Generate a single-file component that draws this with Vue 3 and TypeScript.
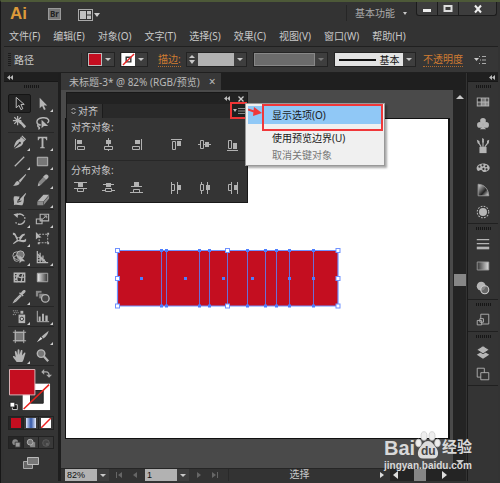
<script setup lang="ts">
import { ref } from 'vue'

interface Tool { name: string; art: string; more?: boolean }
interface Icon { name: string; art: string }

const menus = ['文件(F)', '编辑(E)', '对象(O)', '文字(T)', '选择(S)', '效果(C)', '视图(V)', '窗口(W)', '帮助(H)']

const line = 'fill="none" stroke="currentColor"'

const toolGroups: Tool[][] = [
  [
    { name: '选择工具', art: `<path d="M5.5 2.5v11l3-2.5 2 4.5 2-1-2-4.5h3.5z" fill="#222" stroke="#c4c4c4"/>` },
    { name: '直接选择工具', more: true, art: `<path d="M6 3v11l2.6-2.4 2 4.4 1.8-.9-2-4.1H14z"/>` },
    { name: '魔棒工具', art: `<path d="M8 8l2-1.500 6 6.500-2 2z"/><path d="M7 2v10M2 7h9M3.500 3.500l7 7M10.500 3.500l-7 7" ${line} stroke-width="1.300"/>` },
    { name: '套索工具', art: `<path d="M7 12c-5-1-6-7 2-8 7-.8 8 4 5 5.500M7 12c-2-2-4 0-2.500 1.500 2 1 1.500 2 0 2.500" ${line} stroke-width="1.500"/><path d="M8 6v9l2.500-2.300H15z"/>` },
  ],
  [
    { name: '钢笔工具', more: true, art: `<path d="M10.500 3l4.500 4-2 1.500c0 3-2 5-9.500 7L9 10.500 8 9.500l-5 5C4.500 8 6 6 9.500 5z"/><path d="M12 1.500l4 4-1 1-4-4z"/><circle cx="9.300" cy="9.500" r="1.200" fill="#333"/>` },
    { name: '文字工具', more: true, art: `<path d="M4 3h10v3.500h-1c-.3-1.800-1-2-3-2V13c0 1 .5 1.200 1.500 1.200v.8h-5v-.8C7.500 14.200 8 14 8 13V4.500c-2 0-2.700.2-3 2H4z"/>` },
    { name: '直线段工具', more: true, art: `<path d="M4 14L14 4" ${line} stroke-width="1.300"/>` },
    { name: '矩形工具', more: true, art: `<path d="M3.500 4.500h11v9h-11z" fill="#777" stroke="#bbb"/>` },
    { name: '画笔工具', art: `<path d="M15.500 2L8 9.200l1.800 1.900L16 3z"/><path d="M7.300 9.500l2 2C8.500 14.500 5 15 2 14.500c2.500-1 2-4.500 5.300-5z"/>` },
    { name: '铅笔工具', more: true, art: `<path d="M12 3l3 3-7 7-4 2 1-4.500z" fill="#858585"/><path d="M12 3c1.500-1.500 4.500 1 3 3l-2 2-3.300-3z"/><path d="M4 15l.8-3 2 2z"/>` },
    { name: '斑点画笔工具', art: `<path d="M3 6c2-1 4 .5 6-.5L8 11l5-5.500c1 1 1 7-1 9.500-3 .5-6-1-9 0 1-3-1-6 0-9z"/><path d="M15.500 2L10 8l-1 3 3-1.500L16 3z"/><path d="M8 8.500L7 12l4-1.500" fill="none" stroke="#333"/>` },
    { name: '橡皮擦工具', more: true, art: `<path d="M10 4h6l-6 7H3.500z"/><path d="M3.500 11.500H10V15H3.500zM10.600 11L16 4.700V8l-5.400 6.500z" fill="#8b8b8b"/>` },
  ],
  [
    { name: '旋转工具', more: true, art: `<path d="M5.500 4.500a5.500 5.500 0 1 1-1 7" ${line} stroke-width="1.500" stroke-dasharray="9 1.500 1.500 1.500"/><path d="M2.500 3.500l5-1-.5 5z"/>` },
    { name: '比例缩放工具', more: true, art: `<path d="M6.500 3.500h9v7h-9zM2.500 8.500h6v5h-6z" ${line} stroke-width="1.200"/><path d="M9 8.500l4-3M10.500 5.200h3v2.500" ${line}/>` },
    { name: '宽度工具', more: true, art: `<path d="M2 3c4-1 3 5 6 5 2-1 3-5 7-4l-1 2c-2 0-2 3-4 4 2 1 4 1 6-1v3c-3 2-6 0-8 0-3 1-4 3-6 3 1-3 4-3 4-5C4.500 8 4.500 5 2 5z"/><circle cx="8" cy="9.500" r="1" fill="#333"/>` },
    { name: '自由变换工具', art: `<path d="M5.500 4.500h9v9h-9z" ${line} stroke-dasharray="2 1.200"/><path d="M2 2v8l2.300-2H8z"/><path d="M14 3h2v2h-2zM14 13h2v2h-2zM4 13h2v2H4z"/>` },
    { name: '形状生成器工具', more: true, art: `<circle cx="6" cy="7" r="4" ${line}/><circle cx="10" cy="6" r="4" fill="#777" stroke="#bbb"/><circle cx="6" cy="10" r="3" ${line}/><path d="M9 6.500V15l2.300-2H15z"/>` },
    { name: '透视网格工具', more: true, art: `<path d="M3.500 2v12.500H15M6.500 4v10M9.500 7v7M3.500 5l9 9M3.500 8.500H8M3.500 11.500h8" ${line} stroke-width="1.300"/>` },
  ],
  [
    { name: '网格工具', art: `<path d="M3.500 4.500h11v9h-11z" ${line} stroke-width="1.500"/><path d="M3 8c4-3 5 4 12 0M6 14c2-3-2-6 1-9M10 14c3-3 0-5 3-9M4 12l5-7" ${line} stroke-width="1.300"/>` },
    { name: '渐变工具', art: `<defs><linearGradient id="tg"><stop stop-color="#eee"/><stop offset="1" stop-color="#333"/></linearGradient></defs><path d="M3.500 4.500h11v9h-11z" fill="url(#tg)" stroke="#aaa"/>` },
    { name: '吸管工具', more: true, art: `<path d="M10 7l-6 6-1 2 2-1 6-6" ${line} stroke-width="1.300"/><path d="M8.500 5.500l1-1 1 .8c1-2 3-4.300 4.500-2.800s-1 3.500-2.600 4.500l1 1-1 1z"/>` },
    { name: '混合工具', art: `<path d="M2 3h6v6H2z" fill="#888"/><path d="M5 5.500h6v6H5z" fill="#888" stroke="#333"/><circle cx="12" cy="11" r="4" fill="#444" stroke="#b5b5b5" stroke-width="1.400"/>` },
  ],
  [
    { name: '符号喷枪工具', more: true, art: `<path d="M8 7h7v9H8z"/><path d="M10 3h3v3h-3z"/><circle cx="11.500" cy="11.500" r="1.800" fill="#ccc" stroke="#333"/><path d="M2 3h5M3 5h5M2 7h4" ${line} stroke-dasharray="1 1"/>` },
    { name: '柱形图工具', more: true, art: `<path d="M3.500 3v11.500H16" ${line}/><path d="M5 9h2v5H5zM8.500 6h2v8h-2zM12 8h2.500v6H12z"/>` },
  ],
  [
    { name: '画板工具', art: `<path d="M4.500 4.500h9v9h-9z" fill="#777" stroke="#b5b5b5"/><path d="M2 4.500h14M2 13.500h14M4.500 2v14M13.500 2v14" ${line}/>` },
    { name: '切片工具', more: true, art: `<path d="M15.500 3L8 9l2 2.200c3-2 5-5 5.500-8.200z"/><path d="M7 9.500l2 2L3 15z" fill="#ddd"/>` },
    { name: '抓手工具', more: true, art: `<path d="M6 16c-1-2-3.500-4-4-6 1-1 2 0 3 1L4 5c.8-1.200 1.800-.5 2 .5l.8 3L7 3c.8-1.200 1.800-.8 1.900.2l.1 5L10.500 3.500c1-.8 1.800-.2 1.600.8L11.700 9 14 6c1-.5 1.500.3 1.200 1.200C14 10 14 13 12 16z"/>` },
    { name: '缩放工具', art: `<circle cx="7.500" cy="7" r="4" fill="#777" stroke="#b5b5b5" stroke-width="1.500"/><path d="M10.500 10l4.500 5" ${line} stroke-width="2.400"/>` },
  ],
]

const dockGroups: Icon[][] = [
  [
    { name: '色板', art: `<path d="M2 4h14v10H2z"/><path d="M3 5h3.500v3.500H3z" fill="#222"/><path d="M7.500 5h3.500v3.500H7.500z" fill="#777"/><path d="M12 5h3v3.500h-3zM3 9.500h3.500V13H3z" fill="#555"/><path d="M7.500 9.500h3.500V13H7.500zM12 9.500h3V13h-3z" fill="#8d8d8d"/>` },
    { name: '符号', art: `<circle cx="9" cy="5.500" r="3.200"/><circle cx="5.500" cy="10" r="3.200"/><circle cx="12.500" cy="10" r="3.200"/><path d="M8.300 7h1.400l.5 5.500 2.300 2.500h-7L7.800 12.500z"/>` },
    { name: '画笔', art: `<path d="M5 10h8v7H5z"/><path d="M7 10L4 5M9 10V4M11 10l3-4" ${line} stroke-width="1.300"/><path d="M2 2l3 1.500V7L3 6zM8 0l2 1v4H8zM13.500 3L16 2l-.5 4-2 1z"/>` },
    { name: '颜色', art: `<path d="M9 4c5 0 7.500 2.500 7.500 5s-3 4.500-6.500 4.500c-2 0-1.500-2-3-2.200C5 11 4.500 13 3 12 0 9 3 4 9 4z"/><g fill="#333"><circle cx="5" cy="7.500" r="1.200"/><circle cx="8.500" cy="6" r="1.200"/><circle cx="12.500" cy="7" r="1.200"/><circle cx="13" cy="10.500" r="1.200"/><circle cx="9.500" cy="10" r="1.200"/></g>` },
    { name: '颜色参考', art: `<defs><linearGradient id="cg" x1="0" x2="1" y1="0" y2="1"><stop stop-color="#ddd"/><stop offset=".6" stop-color="#222"/><stop offset="1" stop-color="#eee"/></linearGradient></defs><path d="M3.500 2.500C11 3 15 8 15.500 15.500h-12z" fill="url(#cg)" stroke="#999"/>` },
    { name: '外观', art: `<circle cx="9" cy="9" r="4.500"/><circle cx="9" cy="9" r="6.500" ${line} stroke-width="1.200" stroke-dasharray="2 1.400"/>` },
  ],
  [
    { name: '描边', art: `<path d="M2 4h14M2 8.500h14" ${line} stroke-width="1.500"/><path d="M2 12h14v3H2z"/>` },
    { name: '渐变', art: `<defs><linearGradient id="dg"><stop stop-color="#333"/><stop offset="1" stop-color="#ddd"/></linearGradient></defs><path d="M2.500 4.500h13v9h-13z" fill="url(#dg)" stroke="#999"/>` },
    { name: '透明度', art: `<circle cx="7" cy="7" r="5"/><circle cx="11" cy="11" r="4.500" fill="#777" fill-opacity=".75" stroke="#ccc" stroke-width="1.200"/>` },
  ],
  [{ name: '变换', art: `<path d="M6.500 2.500h9v11h-9z" ${line}/><path d="M2.500 9.500h5v5h-5zM5.500 7.500h4v4h-4z" fill="#333" stroke="#b5b5b5"/>` }],
  [
    { name: '图层', art: `<path d="M9 8l7 4-7 4.500L2 12z"/><path d="M9 2l7 4.500-7 4.500-7-4.500z" stroke="#333"/>` },
    { name: '画板', art: `<path d="M2.500 2.500h8v10h-8z" ${line}/><path d="M6.500 7.500h9v8h-9z" fill="#333" stroke="#b5b5b5"/>` },
  ],
]

const alignRows: { label: string; groups: Icon[][] }[] = [
  {
    label: '对齐对象:',
    groups: [
      [
        { name: '水平左对齐', art: `<path d="M1.500 1v11" ${line}/><path d="M3 2h5v4H3z"/><path d="M3.500 8.500h7v3h-7z" ${line}/>` },
        { name: '水平居中对齐', art: `<path d="M6.500 0v13" ${line}/><path d="M4 2h5v4H4z"/><path d="M2.500 8.500h8v3h-8z" fill="#333" stroke="currentColor"/>` },
        { name: '水平右对齐', art: `<path d="M11.500 1v11" ${line}/><path d="M5 2h5v4H5z"/><path d="M2.500 8.500h7v3h-7z" ${line}/>` },
      ],
      [
        { name: '垂直顶对齐', art: `<path d="M1 1.500h11" ${line}/><path d="M7 3h4v5H7z"/><path d="M2.500 3.500h3v8h-3z" ${line}/>` },
        { name: '垂直居中对齐', art: `<path d="M0 6.500h13" ${line}/><path d="M7 4h4v5H7z"/><path d="M2.500 2.500h3v8h-3z" fill="#333" stroke="currentColor"/>` },
        { name: '垂直底对齐', art: `<path d="M1 12.500h11" ${line}/><path d="M7 5h4v6H7z"/><path d="M2.500 2.500h3v8h-3z" ${line}/>` },
      ],
    ],
  },
  {
    label: '分布对象:',
    groups: [
      [
        { name: '垂直顶分布', art: `<path d="M0 1.500h13M0 7.500h13" ${line}/><path d="M4 2h5v4H4z"/><path d="M3.500 7.500h6v3h-6z" ${line}/>` },
        { name: '垂直居中分布', art: `<path d="M1 3.500h11M0 9.500h13" ${line}/><path d="M4 2h5v4H4z"/><path d="M3.500 7.500h6v3h-6z" fill="#333" stroke="currentColor"/>` },
        { name: '垂直底分布', art: `<path d="M1 5.500h11M0 11.500h13" ${line}/><path d="M4 1h5v4H4z"/><path d="M3.500 8.500h6v3h-6z" ${line}/>` },
      ],
      [
        { name: '水平左分布', art: `<path d="M1.500 1v12M7.500 1v12" ${line}/><path d="M8 4h3v5H8z"/><path d="M1.500 3.500h3v6h-3z" ${line}/>` },
        { name: '水平居中分布', art: `<path d="M3.500 1v12M9.500 1v12" ${line}/><path d="M8 4h4v5H8z"/><path d="M2.500 3.500h3v6h-3z" fill="#333" stroke="currentColor"/>` },
        { name: '水平右分布', art: `<path d="M5.500 1v12M11.500 1v12" ${line}/><path d="M8 4h3v5H8z"/><path d="M2.500 3.500h3v6h-3z" ${line}/>` },
      ],
    ],
  },
]

const edges = [161.5, 166.5, 199.5, 209.5, 227.5, 247.5, 265.5, 276.5, 289.5, 313.5]
const centers = [141.5, 185.5, 223.5, 252.5, 289.5, 313.5]
const handles = [117.5, 227.5, 338]

const active = ref('选择工具')
const strokeWidth = ref('')
const zoom = ref('82%')
const page = ref('1')
</script>

<template>
  <div class="app">
    <header class="titlebar">
      <span class="logo">Ai</span>
      <button class="bridge" aria-label="Bridge">Br</button>
      <button class="arrange" aria-label="排列文档">
        <svg width="22" height="12" viewBox="0 0 22 12"><rect x=".5" y=".5" width="14" height="11" fill="#333" stroke="#aaa" /><path d="M2 2h6v8H2zM9 2h4v3.500H9zM9 6.500h4V10H9z" fill="#c2c2c2" /><path d="M16 4h6l-3 4z" fill="#ccc" /></svg>
      </button>
      <button class="workspace">基本功能 <i class="caret"></i></button>
      <div class="controls">
        <button aria-label="最小化"><svg width="12" height="10" viewBox="0 0 12 10"><path d="M2 5h8v3H2z" fill="#eee" /></svg></button>
        <button aria-label="最大化"><svg width="12" height="10" viewBox="0 0 12 10"><path d="M2.500 2h7v5h-7z" fill="none" stroke="#ddd" stroke-width="2" /></svg></button>
        <button class="close" aria-label="关闭"><svg width="12" height="10" viewBox="0 0 12 10"><path d="M3 1.500l6 7M9 1.500l-6 7" stroke="#eee" stroke-width="2" /></svg></button>
      </div>
    </header>

    <nav class="menubar">
      <button v-for="m in menus" :key="m">{{ m }}</button>
    </nav>

    <section class="options">
      <i class="vgrip"></i>
      <span class="kind">路径</span>
      <div class="combo fill"><button class="swatch red" aria-label="填色"></button><button class="drop" aria-label="填色选项"><i class="caret"></i></button></div>
      <div class="combo stroke"><button class="swatch none" aria-label="描边颜色"><svg viewBox="0 0 14 14"><path d="M0 0h14v14H0z" fill="#fff" /><path d="M4.500 4.500h5v5h-5z" fill="none" stroke="#333" stroke-width="1.500" /><path d="M1 13L13 1" stroke="#e22" stroke-width="1.500" /></svg></button><button class="drop" aria-label="描边选项"><i class="caret"></i></button></div>
      <label class="link" for="sw">描边:</label>
      <div class="combo weight">
        <button class="spin" aria-label="调整粗细"><i class="caret up"></i><i class="caret"></i></button>
        <input id="sw" v-model="strokeWidth" />
        <button class="drop" aria-label="粗细列表"><i class="caret"></i></button>
      </div>
      <div class="combo profile"><button class="preview dim" aria-label="变量宽度"></button><button class="drop off" aria-label="宽度配置"><i class="caret"></i></button></div>
      <div class="combo brush"><button class="preview light"><i class="rule"></i>基本</button><button class="drop" aria-label="画笔定义"><i class="caret"></i></button></div>
      <a class="link" href="#opacity">不透明度</a>
      <button class="flyout" aria-label="面板菜单"><svg width="12" height="10" viewBox="0 0 12 10"><path d="M0 3h5L2.500 6z" fill="#ccc" /><path d="M5 1.500h1M8 1.500h4M6 5h1M8 5h4M5 8.500h1M8 8.500h4" stroke="#aaa" /></svg></button>
    </section>

    <div class="body">
      <aside class="tools">
        <div class="head"><svg class="chev" viewBox="0 0 6 5"><path d="M3 0v5L0 2.500zM6 0v5L3 2.500z" /></svg></div>
        <i class="grip"></i>
        <div v-for="(g, i) in toolGroups" :key="i" class="toolgroup">
          <button v-for="t in g" :key="t.name" class="tool" :class="{ active: t.name === active, more: t.more }" :aria-label="t.name" @click="active = t.name">
            <svg viewBox="0 0 18 18" v-html="t.art"></svg>
          </button>
        </div>
        <svg class="colors" viewBox="0 0 44 44">
          <path d="M14 15h28v27H14z" fill="#fff" /><path d="M22 22h13v13H22z" fill="#333" stroke="#222" /><path d="M15 41L41 16" stroke="#e8201a" stroke-width="1.500" />
          <path d="M.5.500h26v26H.5z" fill="#c40e20" stroke="#ddb5b8" />
          <path d="M35 3h3q3 0 3 4" fill="none" stroke="#aaa" stroke-width="1.300" /><path d="M36 0v6l-3-3zM38 6h6l-3 3z" fill="#aaa" />
          <path d="M3.500 36.500h5v5h-5z" fill="#111" stroke="#ccc" /><path d="M1 34h5v5H1z" fill="#fff" stroke="#222" />
        </svg>
        <div class="modes">
          <button aria-label="颜色"><i class="m-color"></i></button>
          <button aria-label="渐变"><i class="m-grad"></i></button>
          <button aria-label="无"><svg class="m-none" viewBox="0 0 10 10"><path d="M0 0h10v10H0z" fill="#fff" /><path d="M0 10L10 0" stroke="#e22" stroke-width="1.500" /></svg></button>
        </div>
        <div class="modes draw">
          <button aria-label="正常绘图"><svg viewBox="0 0 12 12"><circle cx="5" cy="5" r="3.500" fill="#888" /><path d="M5 5h6v6H5z" fill="#999" stroke="#333" /></svg></button>
          <button aria-label="背面绘图"><svg viewBox="0 0 12 12"><path d="M5 5h6v6H5z" fill="#888" /><circle cx="5" cy="5" r="3.500" fill="#777" stroke="#bbb" /></svg></button>
          <button aria-label="内部绘图"><svg viewBox="0 0 12 12"><circle cx="6" cy="6" r="4" fill="#444" stroke="#5e5e5e" /><path d="M6 6h3v3H6z" fill="#5e5e5e" /></svg></button>
        </div>
        <button class="screen" aria-label="更改屏幕模式"><svg width="18" height="14" viewBox="0 0 18 14"><path d="M1.500 5.500h9v7h-9z" fill="#666" stroke="#aaa" /><path d="M5.500 1.500h11v7h-11z" fill="#777" stroke="#bbb" /></svg></button>
      </aside>

      <main class="doc">
        <div class="tabs"><div class="tab">未标题-3* @ 82% (RGB/预览)<button aria-label="关闭文档">×</button></div></div>
        <div class="work">
          <div class="canvas">
            <div class="artboard">
              <svg class="art" width="228" height="64" viewBox="114 247 228 64">
                <path d="M117.500 250.500h220.500v55.500h-220.500z" fill="#c40e20" stroke="#6f91ff" stroke-width="1.200" />
                <g v-for="x in edges" :key="x">
                  <path :d="`M${x} 251v55`" stroke="#6a6fd8" stroke-width="1" />
                  <path :d="`M${x - 1.5} 249h3v3h-3zM${x - 1.5} 304.500h3v3h-3z`" fill="#4d7dff" />
                </g>
                <path v-for="x in centers" :key="'c' + x" :d="`M${x - 1.5} 277h3v3h-3z`" fill="#4d7dff" />
                <template v-for="x in handles" :key="'h' + x">
                  <rect v-for="y in (x === 227.5 ? [250.5, 306] : [250.5, 278.5, 306])" :key="y" :x="x - 2" :y="y - 2" width="4" height="4" fill="#fff" stroke="#6f91ff" />
                </template>
              </svg>
            </div>
          </div>
          <div class="vscroll"><i class="caret up"></i><i class="thumb"></i><i class="caret"></i></div>
        </div>
        <footer class="status">
          <input v-model="zoom" aria-label="缩放" /><button class="drop" aria-label="缩放列表"><i class="caret"></i></button>
          <div class="nav"><button aria-label="首项"><svg viewBox="0 0 8 8"><path d="M1 1h1v6H1zM7 1v6L3 4z" /></svg></button><button aria-label="上一项"><svg viewBox="0 0 8 8"><path d="M6 1v6L2 4z" /></svg></button></div>
          <input v-model="page" aria-label="画板" /><button class="drop" aria-label="画板列表"><i class="caret"></i></button>
          <div class="nav"><button aria-label="下一项"><svg viewBox="0 0 8 8"><path d="M2 1v6l4-3z" /></svg></button><button aria-label="末项"><svg viewBox="0 0 8 8"><path d="M6 1h1v6H6zM1 1v6l4-3z" /></svg></button></div>
          <div class="state">选择</div>
          <button class="tri" aria-label="状态菜单"><svg viewBox="0 0 8 8"><path d="M2 1v6l4-3z" /></svg></button>
          <div class="hscroll"><svg viewBox="0 0 8 8"><path d="M6 0v8L1 4z" /></svg><i class="thumb"></i><svg viewBox="0 0 8 8"><path d="M2 0v8l5-4z" /></svg></div>
        </footer>

        <section class="panel">
          <div class="phead"><svg class="chev" viewBox="0 0 6 5"><path d="M3 0v5L0 2.500zM6 0v5L3 2.500z" /></svg><button aria-label="关闭面板"><svg viewBox="0 0 6 6"><path d="M.5.500l5 5M5.500.500l-5 5" stroke="#ccc" stroke-width="1.300" /></svg></button></div>
          <div class="ptabs">
            <div class="ptab"><svg width="5" height="8" viewBox="0 0 5 8"><path d="M.5 3l2-2 2 2M.5 5l2 2 2-2" fill="none" stroke="#bbb" /></svg>对齐</div>
            <button class="pmenu" aria-label="面板菜单"><svg width="12" height="8" viewBox="0 0 12 8"><path d="M0 2h4L2 5z" fill="#bbb" /><path d="M5 1.500h7M5 4h7M5 6.500h7" stroke="#888" /></svg></button>
          </div>
          <div v-for="r in alignRows" :key="r.label" class="prow">
            <div class="plabel">{{ r.label }}</div>
            <div class="pgroups">
              <div v-for="(g, i) in r.groups" :key="i" class="pgroup">
                <button v-for="b in g" :key="b.name" :aria-label="b.name"><svg viewBox="0 0 13 13" v-html="b.art"></svg></button>
              </div>
            </div>
          </div>
        </section>

        <div class="popup" role="menu">
          <button class="hot" role="menuitem">显示选项(O)</button>
          <button role="menuitem">使用预览边界(U)</button>
          <button role="menuitem" disabled>取消关键对象</button>
          <svg class="arrow" width="14" height="10" viewBox="0 0 14 10"><path d="M0 2.500l6 2" stroke="#f0383a" stroke-width="2" /><path d="M6 0l8 6-9 3z" fill="#f0383a" /></svg>
        </div>
      </main>

      <aside class="dock">
        <div class="head"><svg class="chev" viewBox="0 0 6 5"><path d="M3 0v5L0 2.500zM6 0v5L3 2.500z" /></svg></div>
        <div v-for="(g, i) in dockGroups" :key="i" class="dockgroup">
          <i class="grip"></i>
          <button v-for="b in g" :key="b.name" :aria-label="b.name"><svg viewBox="0 0 18 18" v-html="b.art"></svg></button>
        </div>
      </aside>
    </div>

    <div class="mark">
      <div class="brand">
        <span class="bai">Bai</span>
        <span class="paw">
          <svg width="26" height="29" viewBox="0 0 26 29"><g fill="#eee" stroke="#ccc" stroke-width=".8"><ellipse cx="3.500" cy="13" rx="2.800" ry="3.800" /><ellipse cx="9" cy="6" rx="3" ry="4.300" /><ellipse cx="17" cy="6" rx="3" ry="4.300" /><ellipse cx="22.500" cy="13" rx="2.800" ry="3.800" /></g><path d="M13 11c4 0 5 3 8 6.500s3.500 11-3 11H8c-6.500 0-6-7.500-3-11s4-6.500 8-6.500z" /></svg>
          <b>du</b>
        </span>
        <span class="jy">经验</span>
      </div>
      <div class="site">jingyan.baidu.com</div>
    </div>
  </div>
</template>

<style>
body { background: #222; }
</style>

<style scoped>
* { box-sizing: border-box; }
.app {
  position: relative;
  display: flex;
  flex-direction: column;
  min-height: 100vh;
  padding: 0 2px 2px 3px;
  border-top: 2px solid #4d5938;
  background: #333;
  border-left: 1px solid #171717;
  color: #c8c8c8;
  font: 10px/14px "Noto Sans", "Noto Sans CJK SC", sans-serif;
  white-space: nowrap;
}
button { display: flex; align-items: center; justify-content: center; padding: 0; border: 0; background: none; color: inherit; font: inherit; }
input { min-width: 0; padding: 0 2px; border: 0; border-radius: 0; background: #b2b2b2; color: #111; font: inherit; }
svg { display: block; flex: none; }
.caret { display: block; width: 6px; border: 3px solid transparent; border-top: 4px solid #c8c8c8; border-bottom: 0; }
.caret.up { border-top: 0; border-bottom: 4px solid #c8c8c8; }

.titlebar { display: flex; height: 24px; padding-left: 6px; align-items: flex-start; }
.logo { width: 38px; color: #dc9a3a; font: bold 17px/24px "Liberation Sans", sans-serif; }
.bridge { width: 13px; height: 12px; margin-top: 6px; border: 1px solid #999; background: #777; color: #222; font-size: 8px; font-weight: bold; line-height: 8px; }
.arrange { margin: 7px 0 0 17px; }
.workspace { gap: 8px; height: 16px; margin: 3px 9px 0 auto; padding-left: 8px; border-left: 1px solid #262626; color: #aaa; }
.workspace .caret { border-width: 3px 2px 0; width: 4px; }
.controls { display: flex; margin-right: 1px; border: 1px solid #1c1c1c; border-top: 0; border-radius: 0 0 3px 3px; background: #3d3d3d; }
.controls button { width: 21px; height: 13px; border-right: 1px solid #1c1c1c; }
.controls .close { width: 37px; border: 0; }

.menubar { display: flex; gap: 13px; height: 20px; padding-left: 5px; }
.menubar button { height: 20px; }

.options { display: flex; align-items: center; height: 27px; padding: 0 12px 0 4px; border-top: 1px solid #202020; border-bottom: 1px solid #202020; background: #363636; }
.vgrip { width: 3px; height: 14px; margin-right: 3px; background: repeating-linear-gradient(#1c1c1c 0 1px, #363636 1px 2px); }
.kind { width: 68px; border-right: 1px solid #2a2a2a; }
.combo { display: flex; flex: none; height: 15px; border: 1px solid #232323; }
.fill { margin-left: 5px; }
.stroke { margin-left: 5px; }
.swatch { width: 14px; background: #c40e20; border: 1px solid #bbb; }
.swatch svg { width: 13px; height: 13px; }
.drop { width: 12px; background: #3e3e3e; }
.drop .caret { border-width: 3px 3px 0; width: 6px; }
.drop.off .caret { border-top-color: #777; }
.link { color: #d07c32; text-decoration: none; line-height: 13px; border-bottom: 1px dotted #b06a2c; }
label.link { margin: 0 5px 0 10px; }
.spin { flex-direction: column; gap: 2px; width: 11px; background: #3c3c3c; }
.spin .caret.up { border-width: 0 3px 3px; }
.weight input { width: 36px; }
.profile { flex: 1 1 0; margin: 0 6px; }
.preview { flex: 1; gap: 4px; }
.dim { background: #6b6b6b; border: 1px solid #888; }
.light { background: #e3e3e3; color: #111; }
.brush { width: 82px; margin-right: 7px; }
.rule { width: 37px; height: 2px; background: #111; }
.flyout { margin-left: 11px; }

.body { display: flex; flex: 1; }
.head { display: flex; align-items: center; height: 9px; padding: 0 3px; background: #1f1f1f; border-bottom: 1px solid #171717; }
.chev { width: 6px; height: 5px; fill: #bbb; }
.grip { display: block; width: 15px; height: 3px; margin: 3px auto; background: repeating-linear-gradient(90deg, #161616 0 1px, #333 1px 2px); }

.tools { flex: none; width: 57px; padding-bottom: 2px; border-right: 3px solid #1e1e1e; background: #343434; }
.tools > .grip { margin-bottom: 6px; }
.toolgroup { display: grid; grid-template-columns: 23px 23px; justify-content: center; margin: 0 4px; border-bottom: 1px solid #262626; }
.tool { position: relative; height: 19px; color: #b5b5b5; fill: currentColor; border: 1px solid transparent; }
.tool svg { width: 17px; height: 17px; }
.tool.active { background: #232323; border-color: #151515; border-radius: 2px; }
.tool.more::after { content: ""; position: absolute; right: 0; bottom: 0; border-left: 3px solid transparent; border-bottom: 3px solid #ccc; }
.colors { width: 43px; height: 43px; margin: 3px 0 4px 5px; }
.modes { display: grid; grid-template-columns: repeat(3, 1fr); gap: 1px; height: 14px; margin: 0 4px 6px; padding: 1px; background: #222; }
.modes button { background: #393939; }
.modes button:first-child { background: #262626; }
.modes.draw { height: 13px; }
.modes svg { width: 10px; height: 10px; }
.m-color { width: 10px; height: 10px; background: #c40e20; }
.m-grad { width: 10px; height: 10px; background: linear-gradient(90deg, #dfe8ff, #3458a8 50%, #e8eeff); }
.screen { margin: 7px auto 0; }

.doc { position: relative; display: flex; flex: 1; flex-direction: column; min-width: 0; background: #4a4a4a; }
.tabs { height: 17px; background: #1f1f1f; }
.tab { display: inline-flex; align-items: center; gap: 9px; height: 17px; padding: 0 5px 0 8px; background: #383838; color: #b8b8b8; }
.tab button { height: 14px; font-size: 12px; }
.work { display: flex; flex: 1; }
.canvas { display: flex; flex: 1; padding: 28px 3px 29px 4px; }
.artboard { position: relative; flex: 1; border: 1px solid #111; border-right-width: 2px; background: #fff; }
.art { position: absolute; left: 48px; top: 128px; }
.vscroll { display: flex; flex-direction: column; align-items: center; justify-content: space-between; width: 13px; padding: 5px 0 4px; background: #242424; }
.vscroll .caret { border-width: 4px 4px 0; width: 8px; }
.vscroll .caret.up { border-width: 0 4px 4px; }
.vscroll .thumb { width: 12px; height: 12px; background: #868686; }
.status { display: flex; height: 13px; padding-left: 4px; border-top: 1px solid #262626; background: #333; line-height: 12px; font-family: "Liberation Sans", "Noto Sans CJK SC", sans-serif; }
.status input { width: 32px; font-size: 9px; }
.nav { display: flex; gap: 6px; padding: 0 5px; }
.nav button { width: 10px; }
.status svg { width: 8px; height: 8px; fill: #ddd; }
.status .nav svg { fill: #666; }
.state { flex: 1; margin-left: 3px; padding-right: 4px; border-left: 1px solid #292929; text-align: center; }
.tri { width: 16px; }
.hscroll { display: flex; align-items: center; justify-content: space-between; width: 76px; padding: 0 18px 0 2px; background: #242424; }
.hscroll .thumb { width: 12px; height: 12px; background: #868686; }

.panel { position: absolute; left: 5px; top: 19px; width: 182px; height: 111px; border: 1px solid #191919; background: #343434; }
.phead { display: flex; align-items: center; justify-content: flex-end; gap: 8px; height: 11px; padding-right: 3px; background: #222; }
.phead button svg { width: 6px; height: 6px; }
.ptabs { display: flex; justify-content: space-between; height: 14px; background: #292929; }
.ptab { display: flex; align-items: center; gap: 2px; width: 36px; padding-left: 4px; background: #343434; border-right: 1px solid #1c1c1c; }
.pmenu { width: 17px; height: 17px; margin-top: -2px; border: 2px solid #ee3535; background: #1f1f1f; }
.prow { height: 42px; padding: 1px 4px 0; }
.prow + .prow { border-top: 1px solid #272727; }
.plabel { line-height: 16px; }
.pgroups { display: flex; justify-content: space-between; padding: 3px 4px 0 3px; }
.pgroup { display: flex; gap: 15px; color: #b2b2b2; fill: currentColor; }
.pgroup svg { width: 13px; height: 13px; }

.popup { position: absolute; left: 184px; top: 30px; width: 140px; padding: 2px; border: 1px solid #999; background: #f0f0f0; color: #1a1a1a; box-shadow: 2px 2px 2px #0005; }
.popup button { justify-content: flex-start; width: 100%; height: 17px; padding-left: 24px; }
.popup .hot { height: 18px; margin-bottom: 5px; background: #90c8f6; }
.popup .hot::after { content: ""; position: absolute; left: 16px; top: 0; right: 1px; height: 23px; border: 2px solid #f0383a; }
.popup button:disabled { color: #777; }
.arrow { position: absolute; left: 2px; top: 3px; }

.dock { flex: none; width: 31px; margin-left: 1px; border-left: 1px solid #1b1b1b; background: #343434; }
.dock .head { justify-content: flex-end; }
.dockgroup { display: flex; flex-direction: column; align-items: center; border-bottom: 1px solid #202020; }
.dockgroup button { width: 100%; height: 22px; color: #b5b5b5; fill: currentColor; }
.dockgroup svg { width: 16px; height: 16px; }

.mark { position: absolute; left: 383px; top: 427px; width: 92px; color: #d8d8d8; font-family: "Liberation Sans", "Noto Sans CJK SC", sans-serif; font-weight: bold; }
.brand { display: flex; align-items: flex-end; height: 30px; }
.bai { width: 31px; font-size: 20px; line-height: 23px; height: 22px; }
.paw { position: relative; fill: #dcdcdc; }
.paw b { position: absolute; left: 6px; top: 15px; color: #444; font-size: 12px; line-height: 12px; }
.jy { font-size: 15px; line-height: 20px; margin-left: 1px; height: 22px; }
.site { font-size: 10px; line-height: 14px; }
</style>
